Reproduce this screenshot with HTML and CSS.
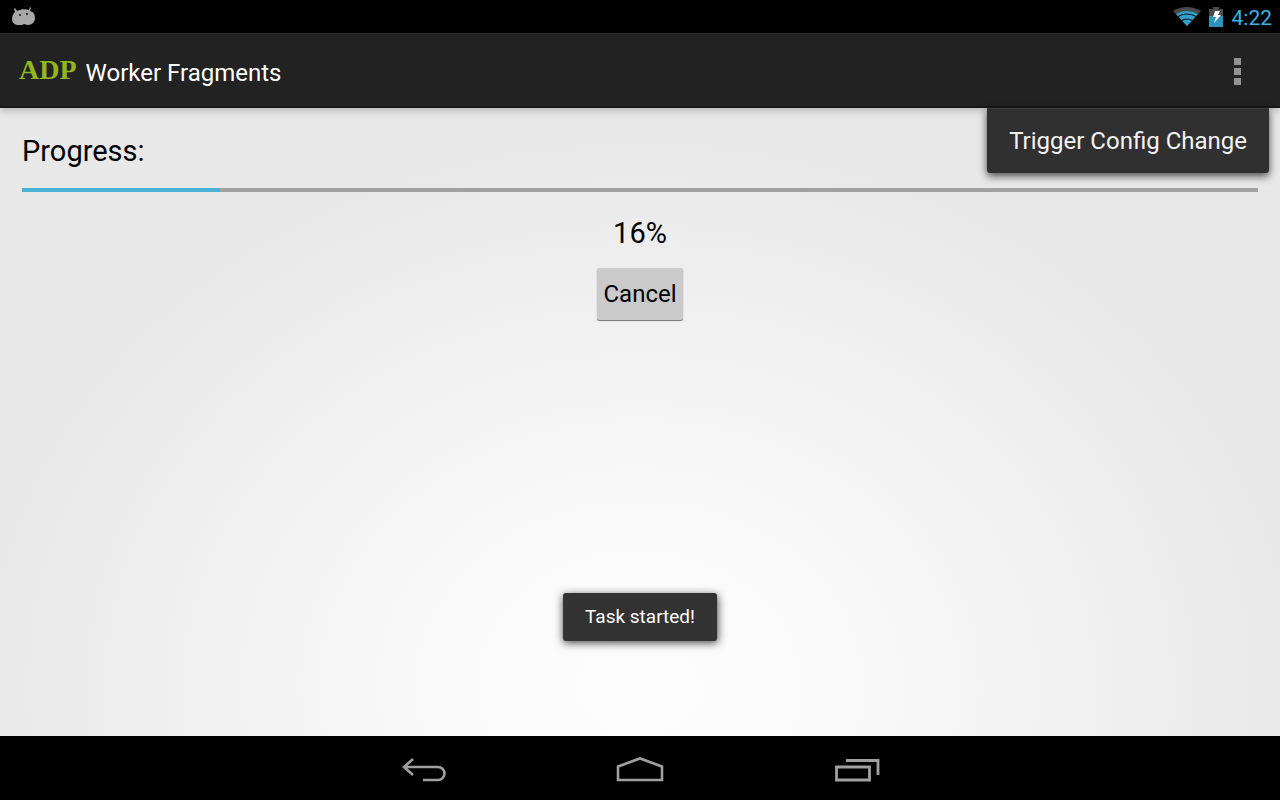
FILE: index.html
```html
<!DOCTYPE html>
<html lang="en">
<head>
    <meta charset="UTF-8">
    <meta name="viewport" content="width=device-width, initial-scale=1.0">
    <title>Worker Fragments</title>
    <link rel="stylesheet" href="styles.css">
</head>
<body>
    <div class="status-bar">
        <svg class="status-icon" width="24" height="20" viewBox="0 0 24 20">
            <path d="M3 1l2 3c4-2 9-2 12-1l1-3 1 1-1 3c4 1 5 4 5 7 0 4-3 7-7 7-2 0-3-1-4-1-1 1-3 1-5 1-4 0-7-2-7-6 0-3 1-5 3-7L2 2z" fill="#a8a8a8"/>
            <circle cx="8" cy="8" r="1" fill="#111"/>
            <circle cx="15" cy="7" r="1" fill="#111"/>
        </svg>
        <div class="status-right">
            <svg width="28" height="20" viewBox="0 0 28 20">
                <path d="M14 19L0 4Q14-4 28 4z" fill="#4a4a4a"/>
                <path d="M14 19L3 7Q14 1 25 7z" fill="#33a0c8"/>
                <path d="M4 10Q14 4 24 10M8 14Q14 10 20 14" fill="none" stroke="#041a22" stroke-width="1.2"/>
            </svg>
            <svg width="14" height="20" viewBox="0 0 14 20">
                <path d="M4 0h6v2h4v8H0V2h4z" fill="#4a4a4a"/>
                <path d="M0 9h14v11H0z" fill="#2f94bb"/>
                <path d="M6 4h5l-2 4h3l-7 8 2-6H4z" fill="#fff"/>
            </svg>
            <span class="clock">4:22</span>
        </div>
    </div>

    <header class="action-bar">
        <span class="logo">ADP</span>
        <h1>Worker Fragments</h1>
        <button type="button" class="overflow" aria-label="More options">
            <svg width="8" height="28" viewBox="0 0 8 28">
                <path d="M0 0h7v7H0zM0 10h7v7H0zM0 20h7v7H0z" fill="#939393"/>
            </svg>
        </button>
        <div class="menu">
            <button type="button" class="menu-item">Trigger Config Change</button>
        </div>
    </header>

    <main class="content">
        <label class="progress-label" for="progress">Progress:</label>
        <progress id="progress" value="16" max="100"></progress>
        <p class="percent">16%</p>
        <button type="button" class="cancel">Cancel</button>
        <div class="toast" role="status">Task started!</div>
    </main>

    <nav class="nav-bar">
        <button type="button" aria-label="Back">
            <svg width="48" height="28" viewBox="0 0 48 28">
                <path d="M14 3L5 11l9 8M5 11h34a6.500 6.500 0 0 1 0 13H24" fill="none" stroke="#a0a0a0" stroke-width="2.600"/>
            </svg>
        </button>
        <button type="button" aria-label="Home">
            <svg width="48" height="28" viewBox="0 0 48 28">
                <path d="M2 10.500L24 2.500l22 8V24H2z" fill="none" stroke="#a0a0a0" stroke-width="2.600"/>
            </svg>
        </button>
        <button type="button" aria-label="Recent apps">
            <svg width="48" height="28" viewBox="0 0 48 28">
                <path d="M3.500 11h33v13h-33zM13 4.500h32V19" fill="none" stroke="#a0a0a0" stroke-width="2.800"/>
            </svg>
        </button>
    </nav>
</body>
</html>
```

FILE: styles.css
```css
* {
    box-sizing: border-box;
}
body {
    display: flex;
    flex-direction: column;
    min-height: 100vh;
    margin: 0;
    font-family: Roboto, "Open Sans", sans-serif;
    background-color: #000;
    color: #000;
}
button {
    padding: 0;
    border: none;
    background: none;
    font-family: inherit;
    cursor: pointer;
}
svg {
    display: block;
}
.status-bar {
    display: flex;
    align-items: center;
    justify-content: space-between;
    height: 33px;
    padding: 0 8px 0 12px;
}
.status-right {
    display: flex;
    align-items: center;
    gap: 8px;
}
.clock {
    margin-left: 1px;
    font-size: 21px;
    line-height: 32px;
    padding-top: 2px;
    color: #33b5e5;
}
.action-bar {
    position: relative;
    z-index: 1;
    display: flex;
    align-items: center;
    height: 75px;
    padding: 2px 30px 0 19px;
    background-color: #222;
    box-shadow: inset 0 1px #2c2c2c, inset 0 -2px #181818, 0 2px 8px rgba(0, 0, 0, 0.25);
}
.logo {
    padding-bottom: 4px;
    font-family: "Liberation Serif", serif;
    font-size: 28px;
    font-weight: bold;
    color: #93b51e;
}
h1 {
    margin: 0 auto 0 9px;
    padding-top: 2px;
    font-size: 24px;
    font-weight: normal;
    color: #fff;
}
.overflow {
    padding: 8px;
}
.menu {
    position: absolute;
    top: 100%;
    right: 11px;
    background-color: #303030;
    border-top: 1px solid #404040;
    border-radius: 0 0 3px 3px;
    box-shadow: 0 3px 8px rgba(0, 0, 0, 0.7);
}
.menu-item {
    padding: 0 22px;
    font-size: 24px;
    line-height: 64px;
    color: #f3f3f3;
}
.content {
    position: relative;
    flex: 1;
    display: flex;
    flex-direction: column;
    padding: 26px 22px;
    background: radial-gradient(ellipse 52% 88% at 50% 92%, #fdfdfd 0%, #fafafa 30%, #e8e8e8 100%);
}
.progress-label {
    font-size: 29px;
    line-height: 34px;
}
progress {
    appearance: none;
    width: 100%;
    height: 4px;
    margin: 20px 0 24px;
    border: none;
    background-color: #a1a1a1;
}
progress::-webkit-progress-bar {
    background-color: #a1a1a1;
}
progress::-webkit-progress-value {
    background-color: #49b1d6;
}
.percent {
    margin: 0 0 18px;
    font-size: 29px;
    line-height: 34px;
    text-align: center;
}
.cancel {
    align-self: center;
    padding: 0 6px;
    font-size: 24px;
    line-height: 52px;
    background-color: #cacaca;
    border-radius: 2px;
    box-shadow: 0 1px 1px #777;
}
.toast {
    position: absolute;
    bottom: 95px;
    left: 50%;
    transform: translateX(-50%);
    padding: 0 22px;
    font-size: 19px;
    line-height: 48px;
    white-space: nowrap;
    color: #fff;
    background-color: #323232;
    border-radius: 3px;
    box-shadow: 0 2px 8px rgba(0, 0, 0, 0.7);
}
.nav-bar {
    display: flex;
    justify-content: center;
    height: 64px;
}
.nav-bar button {
    display: flex;
    align-items: center;
    justify-content: center;
    width: 217px;
    padding-top: 4px;
}
```
